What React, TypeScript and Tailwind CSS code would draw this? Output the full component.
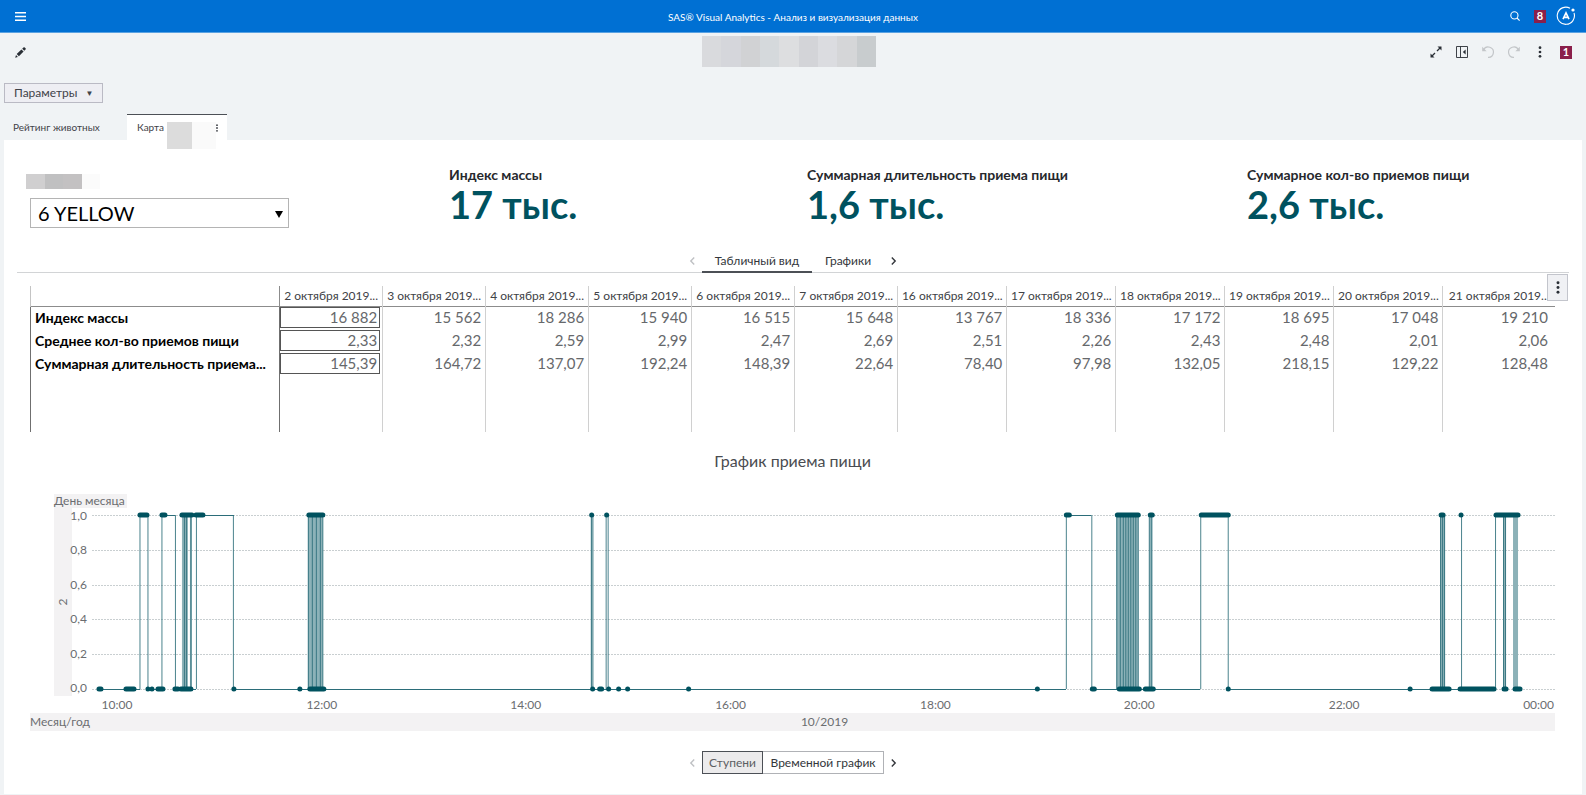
import type { ReactNode } from "react";

const DAYS = [2, 3, 4, 5, 6, 7, 16, 17, 18, 19, 20, 21];

const ROWS = [
  {
    label: "Индекс массы",
    values: ["16 882", "15 562", "18 286", "15 940", "16 515", "15 648", "13 767", "18 336", "17 172", "18 695", "17 048", "19 210"],
  },
  {
    label: "Среднее кол-во приемов пищи",
    values: ["2,33", "2,32", "2,59", "2,99", "2,47", "2,69", "2,51", "2,26", "2,43", "2,48", "2,01", "2,06"],
  },
  {
    label: "Суммарная длительность приема...",
    values: ["145,39", "164,72", "137,07", "192,24", "148,39", "22,64", "78,40", "97,98", "132,05", "218,15", "129,22", "128,48"],
  },
];

const KPIS = [
  { label: "Индекс массы", value: "17 тыс." },
  { label: "Суммарная длительность приема пищи", value: "1,6 тыс." },
  { label: "Суммарное кол-во приемов пищи", value: "2,6 тыс." },
];

/* Positions along the time axis, in units of 1/1464 of its length. */
const AXIS_LENGTH = 1464;
const TOP = 7;
const BOTTOM = 181;

type Span = [number, number];

const MARKERS_HIGH: Span[] = [
  [48, 55], [70, 73], [90, 100], [104, 111], [217, 231], [500, 500], [515, 515], [975, 978],
  [1026, 1047], [1059, 1061], [1110, 1137], [1350, 1352], [1370, 1370], [1405, 1427],
];
const MARKERS_LOW: Span[] = [
  [7, 9], [34, 42], [56, 56], [60, 60], [66, 71], [83, 86], [89, 99], [142, 142], [208, 208], [218, 232],
  [501, 501], [508, 510], [517, 517], [527, 527], [536, 536], [597, 597], [946, 946], [1001, 1003],
  [1028, 1048], [1054, 1062], [1137, 1137], [1319, 1319], [1341, 1358], [1369, 1403], [1413, 1415],
  [1424, 1429],
];
const LINES_HIGH: Span[] = [
  [48, 56], [70, 83], [90, 100], [104, 142], [216, 231], [975, 1000], [1026, 1047], [1109, 1137], [1404, 1427],
];
const LINES_LOW: Span[] = [
  [7, 48], [56, 70], [83, 104], [142, 975], [1000, 1109], [1137, 1404], [1413, 1414], [1422, 1428],
];
const STEPS = [
  48, 56, 70, 83.5, 92.5, 94.5, 99, 104.5, 141.5, 216.5, 220.5, 224.5, 228.5, 231,
  500, 514.5, 516.5, 975, 1000.5, 1025.5, 1029, 1032, 1034.5, 1037, 1039.5, 1042, 1044.5, 1047,
  1058, 1060.5, 1109.5, 1137, 1349.5, 1351.5, 1353.5, 1370.5, 1404.5, 1412.5, 1414.5,
];
const SHADED: Span[] = [
  [90, 96], [98, 100], [216, 231], [499, 502], [1025, 1047], [1058, 1061], [1349, 1354], [1412, 1415], [1422, 1427],
];
const HOURS: { label: string; at: number; end?: boolean }[] = [
  { label: "10:00", at: 25 },
  { label: "12:00", at: 230 },
  { label: "14:00", at: 434 },
  { label: "16:00", at: 639 },
  { label: "18:00", at: 844 },
  { label: "20:00", at: 1048 },
  { label: "22:00", at: 1253 },
  { label: "00:00", at: 1463, end: true },
];
const LEVELS = ["1,0", "0,8", "0,6", "0,4", "0,2", "0,0"];

const pct = (v: number) => `${((v / AXIS_LENGTH) * 100).toFixed(3)}%`;
const levelY = (i: number) => TOP + Math.round((i * (BOTTOM - TOP)) / 5);

function Chevron({ dir }: { dir: "left" | "right" }) {
  return (
    <svg width="7" height="10" viewBox="0 0 7 10" fill="none" stroke="currentColor" strokeWidth="1.4" aria-hidden="true">
      <path d={dir === "left" ? "M5.2 1.5 1.8 5l3.4 3.5" : "M1.8 1.5 5.2 5 1.8 8.5"} />
    </svg>
  );
}

function Dots({ className }: { className: string }) {
  return (
    <svg viewBox="0 0 4 14" className={className} fill="currentColor" aria-hidden="true">
      <circle cx="2" cy="2" r="1.6" />
      <circle cx="2" cy="7" r="1.6" />
      <circle cx="2" cy="12" r="1.6" />
    </svg>
  );
}

function IconButton({ label, children, className = "" }: { label: string; children: ReactNode; className?: string }) {
  return (
    <button type="button" aria-label={label} className={`flex h-5 w-5 shrink-0 items-center justify-center ${className}`}>
      {children}
    </button>
  );
}

function TopBar() {
  return (
    <header className="grid h-[33px] grid-cols-[1fr_auto_1fr] items-center border-b border-[#5aa2e2] bg-[#0070d3] px-[10px] text-white">
      <IconButton label="Меню">
        <svg width="11" height="9" viewBox="0 0 11 9" fill="currentColor" aria-hidden="true">
          <path d="M0 0h11v1.6H0zM0 3.7h11v1.6H0zM0 7.4h11V9H0z" />
        </svg>
      </IconButton>
      <h1 className="pt-[2px] text-[10px] leading-4">SAS® Visual Analytics - Анализ и визуализация данных</h1>
      <div className="flex items-center justify-end">
        <IconButton label="Поиск">
          <svg width="10" height="10" viewBox="0 0 10 10" fill="none" stroke="currentColor" strokeWidth="1.1" aria-hidden="true">
            <circle cx="4.4" cy="4.4" r="3.6" />
            <path d="m7 7 2.6 2.6" />
          </svg>
        </IconButton>
        <span className="ml-[9px] flex h-[13px] w-3 items-center justify-center bg-[#8a1f4b] text-[11px] font-bold">8</span>
        <button type="button" aria-label="Учетная запись" className="ml-[10px]">
          <svg width="20" height="20" viewBox="0 0 20 20" fill="none" stroke="currentColor" aria-hidden="true">
            <path d="M14 2.2A8.6 8.6 0 1 0 18 7" strokeWidth="1.1" />
            <circle cx="17" cy="4" r="1.6" fill="currentColor" stroke="none" />
            <path d="M7 13.2 10 6.8l3 6.4M8 11.4h4" strokeWidth="1.6" />
          </svg>
        </button>
      </div>
    </header>
  );
}

function Toolbar() {
  return (
    <div className="grid h-[50px] grid-cols-[1fr_auto_1fr] px-[10px]">
      <IconButton label="Изменить" className="mt-[9px] text-[#2a2f36]">
        <svg width="11" height="11" viewBox="0 0 11 11" fill="currentColor" aria-hidden="true">
          <path d="M0.2 10.8 1 8l1.9 1.9zM1.7 7.1 6.4 2.4l2.2 2.2-4.7 4.7zM7.2 1.7 8.4.5a1 1 0 0 1 1.4 0l.7.7a1 1 0 0 1 0 1.4L9.3 3.8z" />
        </svg>
      </IconButton>
      <div className="mt-[3px] mr-2 flex h-[31px]" aria-hidden="true">
        <span className="w-[19px] bg-[#d9dadd]" />
        <span className="w-5 bg-[#d5d6db]" />
        <span className="w-[19px] bg-[#d1d2d4]" />
        <span className="w-[19px] bg-[#d5d9dc]" />
        <span className="w-5 bg-[#dddee0]" />
        <span className="w-[19px] bg-[#d3d4d8]" />
        <span className="w-[19px] bg-[#dbdce0]" />
        <span className="w-5 bg-[#d5d6d8]" />
        <span className="w-[19px] bg-[#c8ccce]" />
      </div>
      <div className="mt-[9px] flex items-start justify-end gap-[6px] text-[#2a2f36]">
        <IconButton label="На весь экран">
          <svg width="12" height="12" viewBox="0 0 12 12" fill="currentColor" stroke="currentColor" aria-hidden="true">
            <path d="M7.5.5h4v4zM.5 7.5v4h4z" stroke="none" />
            <path d="M10.5 1.5 7 5M5 7l-3.5 3.5" strokeWidth="1.3" />
          </svg>
        </IconButton>
        <IconButton label="Боковая панель">
          <svg width="12" height="12" viewBox="0 0 12 12" fill="none" stroke="currentColor" strokeWidth="0.9" aria-hidden="true">
            <path d="M.5.5h11v11H.5zM4.5.5v11" />
            <path d="M9.6 3.6v4.8L6.8 6z" fill="currentColor" stroke="none" />
          </svg>
        </IconButton>
        <IconButton label="Отменить" className="text-[#c3c6c9]">
          <svg width="12" height="12" viewBox="0 0 12 12" fill="none" stroke="currentColor" strokeWidth="1.2" aria-hidden="true">
            <path d="M1.5 4A5.2 5.2 0 1 1 6 11.4" />
            <path d="M.2.8v4.4h4.4z" fill="currentColor" stroke="none" />
          </svg>
        </IconButton>
        <IconButton label="Повторить" className="text-[#c3c6c9]">
          <svg width="12" height="12" viewBox="0 0 12 12" fill="none" stroke="currentColor" strokeWidth="1.2" aria-hidden="true">
            <path d="M10.5 4A5.2 5.2 0 1 0 6 11.4" />
            <path d="M11.8.8v4.4H7.4z" fill="currentColor" stroke="none" />
          </svg>
        </IconButton>
        <IconButton label="Еще">
          <Dots className="h-3 w-1" />
        </IconButton>
        <span className="mx-1 mt-1 flex h-[13px] w-3 items-center justify-center bg-[#8a1f4b] text-[11px] font-bold text-white">1</span>
      </div>
    </div>
  );
}

function PageTabs() {
  return (
    <>
      <button
        type="button"
        className="flex h-5 items-center gap-2 border border-[#babac4] bg-[#eeeef3] px-[9px] text-[12px] leading-4 text-[#3f4248]"
      >
        Параметры <span className="text-[8px]">▼</span>
      </button>
      <nav className="mt-[11px] flex h-[26px] items-stretch text-[10px] text-[#3f4248]">
        <a href="#rating" className="flex w-[123px] items-center px-[9px]">
          Рейтинг животных
        </a>
        <a href="#map" className="relative flex w-[100px] items-center border-t border-[#4c5056] bg-white pr-2 pl-[10px]">
          Карта
          <span className="absolute top-[7px] left-10 flex h-[27px]" aria-hidden="true">
            <span className="w-[25px] bg-[#dcdcdc]" />
            <span className="w-6 bg-[#fafafa]" />
          </span>
          <Dots className="relative ml-auto h-2 w-1" />
        </a>
      </nav>
    </>
  );
}

function Summary() {
  return (
    <section className="grid grid-cols-[419fr_358fr_440fr_335fr] pl-[26px]">
      <div className="pt-[34px]">
        <label htmlFor="animal" className="-ml-1 flex h-[15px]" aria-label="Животное">
          <span className="w-[19px] bg-[#d0cfd0]" />
          <span className="w-[18px] bg-[#c0c0c1]" />
          <span className="w-[19px] bg-[#c3c1c2]" />
          <span className="w-[18px] bg-[#fbfbfb]" />
        </label>
        <div className="relative mt-[9px] w-[259px]">
          <select
            id="animal"
            className="h-[30px] w-full appearance-none border border-[#b4b4b4] bg-white px-[7px] text-[20px] leading-7 text-black"
          >
            <option>6 YELLOW</option>
          </select>
          <svg width="8" height="7" viewBox="0 0 8 7" className="pointer-events-none absolute top-[13px] right-[6px]" aria-hidden="true">
            <path d="M0 0h8L4 7z" />
          </svg>
        </div>
      </div>
      {KPIS.map((k) => (
        <div key={k.label} className="pt-[27px]">
          <h2 className="text-[14px] leading-4 font-bold whitespace-nowrap text-[#26282d]">{k.label}</h2>
          <p className="text-[38px] leading-[42px] font-bold whitespace-nowrap text-[#00525f]">{k.value}</p>
        </div>
      ))}
    </section>
  );
}

function ViewTabs() {
  return (
    <div className="mx-[13px] mt-[22px] flex h-[23px] items-stretch justify-center border-b border-[#d2d4d6] text-[12px] text-[#33363b]">
      <button type="button" aria-label="Предыдущая вкладка" className="px-[6px] text-[#bfc1c4]">
        <Chevron dir="left" />
      </button>
      <button type="button" className="-mb-px w-[110px] border-b-2 border-[#4c5056]">
        Табличный вид
      </button>
      <button type="button" className="w-[72px]">
        Графики
      </button>
      <button type="button" aria-label="Следующая вкладка" className="px-[6px]">
        <Chevron dir="right" />
      </button>
    </div>
  );
}

function DataTable() {
  return (
    <section className="relative mr-[27px] ml-[26px] pt-[13px]">
      <table className="h-[146px] w-full table-fixed border-collapse">
        <colgroup>
          <col className="w-[249px]" />
          {DAYS.map((d) => (
            <col key={d} className={d < 16 ? "w-[103px]" : d === 21 ? "w-[112px]" : "w-[109px]"} />
          ))}
        </colgroup>
        <thead>
          <tr className="h-5 border-b border-[#8c8c8c] text-[12px] text-[#404246]">
            <th className="border-l border-[#c4c4c4]" aria-label="Показатель" />
            {DAYS.map((d, i) => (
              <th
                key={d}
                scope="col"
                className={`p-0 text-center leading-4 font-normal whitespace-nowrap ${i === 0 ? "border-l border-[#8c8c8c]" : "border-l border-[#d0d0d0]"}`}
              >
                {d} октября 2019...
              </th>
            ))}
          </tr>
        </thead>
        <tbody>
          {ROWS.map((r) => (
            <tr key={r.label} className="h-[23px]">
              <th
                scope="row"
                className="border-l border-[#6f6f6f] p-0 pl-1 text-left text-[14px] leading-4 font-bold whitespace-nowrap text-black"
              >
                {r.label}
              </th>
              {r.values.map((v, i) => (
                <td
                  key={i}
                  className={`border-l p-0 text-right text-[15px] leading-[19px] text-[#66686b] ${i === 0 ? "border-[#6f6f6f]" : i === 11 ? "border-[#d0d0d0] pr-[7px]" : "border-[#d0d0d0] pr-1"}`}
                >
                  {i === 0 ? <span className="mr-[2px] block border border-[#555] pr-[2px]">{v}</span> : v}
                </td>
              ))}
            </tr>
          ))}
          <tr>
            <td className="border-l border-[#6f6f6f]" />
            {DAYS.map((d, i) => (
              <td key={d} className={i === 0 ? "border-l border-[#6f6f6f]" : "border-l border-[#d0d0d0]"} />
            ))}
          </tr>
        </tbody>
      </table>
      <button
        type="button"
        aria-label="Меню объекта"
        className="absolute top-px -right-[13px] flex h-[27px] w-[21px] items-center justify-center border border-[#c3c5cc] bg-[#f0f1f4] text-[#2a2f36]"
      >
        <Dots className="h-[13px] w-1" />
      </button>
    </section>
  );
}

function Plot() {
  return (
    <svg className="h-[205px] w-full overflow-visible" role="img" aria-label="График приема пищи">
      {LEVELS.map((l, i) => (
        <line key={l} x1="0" x2="100%" y1={levelY(i)} y2={levelY(i)} stroke="#c9cfd1" strokeDasharray="2 1" shapeRendering="crispEdges" />
      ))}
      {SHADED.map(([a, b]) => (
        <rect key={a} x={pct(a)} width={pct(b - a)} y={TOP} height={BOTTOM - TOP} fill="#8cb2b8" />
      ))}
      <g stroke="#2b6d79">
        <g strokeOpacity="0.85">
          {STEPS.map((s) => (
            <line key={s} x1={pct(s)} x2={pct(s)} y1={TOP} y2={BOTTOM} />
          ))}
        </g>
        {LINES_HIGH.map(([a, b]) => (
          <line key={a} x1={pct(a)} x2={pct(b)} y1={TOP} y2={TOP} shapeRendering="crispEdges" />
        ))}
        {LINES_LOW.map(([a, b]) => (
          <line key={a} x1={pct(a)} x2={pct(b)} y1={BOTTOM} y2={BOTTOM} shapeRendering="crispEdges" />
        ))}
      </g>
      <g stroke="#00525f" strokeWidth="5" strokeLinecap="round">
        {MARKERS_HIGH.map(([a, b]) => (
          <line key={a} x1={pct(a)} x2={pct(b)} y1={TOP} y2={TOP} />
        ))}
        {MARKERS_LOW.map(([a, b]) => (
          <line key={a} x1={pct(a)} x2={pct(b)} y1={BOTTOM} y2={BOTTOM} />
        ))}
      </g>
      <g fill="#6b6d70" className="text-[12px]">
        {HOURS.map((h) => (
          <text key={h.label} x={pct(h.at)} y={201} textAnchor={h.end ? "end" : "middle"}>
            {h.label}
          </text>
        ))}
      </g>
    </svg>
  );
}

function FeedingChart() {
  return (
    <section className="mr-[27px] ml-[26px] pt-[19px] text-[12px] text-[#6b6d70]">
      <h2 className="text-center text-[16px] leading-5 text-[#4a4c50]">График приема пищи</h2>
      <div className="mt-[23px] ml-6 flex">
        <span className="bg-[#f3f2f3] pr-[2px] leading-[14px]">День месяца</span>
      </div>
      <div className="ml-6 flex">
        <div className="flex h-[188px] w-[18px] shrink-0 items-center justify-center bg-[#f3f2f3]">
          <span className="-rotate-90 leading-4">2</span>
        </div>
        <div className="flex h-[188px] w-5 shrink-0 flex-col items-end justify-between pr-[5px] leading-4">
          {LEVELS.map((l) => (
            <span key={l}>{l}</span>
          ))}
        </div>
        <div className="min-w-0 flex-1">
          <Plot />
        </div>
      </div>
      <div className="grid h-[18px] grid-cols-[1fr_auto_1fr] items-center bg-[#f3f2f3] leading-4">
        <span>Месяц/год</span>
        <span className="ml-16">10/2019</span>
      </div>
    </section>
  );
}

function ChartSwitcher() {
  return (
    <div className="flex items-center justify-center pt-5 pb-5 text-[12px] leading-4 text-[#33363b]">
      <button type="button" aria-label="Предыдущий график" className="px-[6px] text-[#bfc1c4]">
        <Chevron dir="left" />
      </button>
      <button type="button" className="h-[23px] w-[61px] border border-[#4c5056] bg-[#ecebec] text-[#5c5e62]">
        Ступени
      </button>
      <button type="button" className="h-[23px] w-[121px] border border-l-0 border-[#b0b2b6] bg-white">
        Временной график
      </button>
      <button type="button" aria-label="Следующий график" className="px-[6px]">
        <Chevron dir="right" />
      </button>
    </div>
  );
}

export default function App() {
  return (
    <div className="min-h-screen bg-[#f0f3f5] font-['Lato','Noto_Sans',sans-serif]">
      <TopBar />
      <Toolbar />
      <div className="px-1">
        <PageTabs />
        <main className="bg-white">
          <Summary />
          <ViewTabs />
          <DataTable />
          <FeedingChart />
          <ChartSwitcher />
        </main>
      </div>
    </div>
  );
}
